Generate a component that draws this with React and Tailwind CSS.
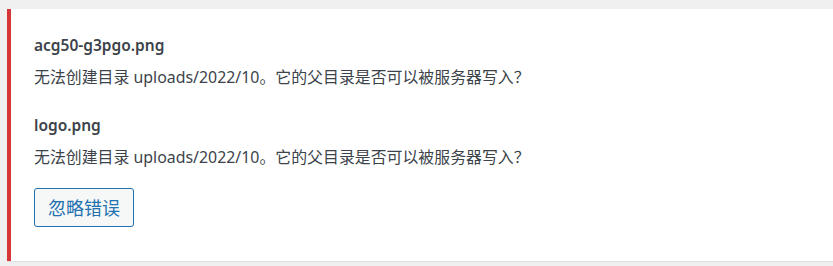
const files = [
	{ name: "acg50-g3pgo.png", error: "无法创建目录 uploads/2022/10。它的父目录是否可以被服务器写入？" },
	{ name: "logo.png", error: "无法创建目录 uploads/2022/10。它的父目录是否可以被服务器写入？" },
];

const UploadErrorNotice = () => {
	return (
		<div className="ml-[7px] mt-[9px] bg-white border-l-4 border-[#d63638] shadow-[0_1px_1px_rgba(0,0,0,0.06)] pl-[23px] pt-[24px] pb-[34px] text-[#3c434a]">
			{files.map((file, i) => (
				<div key={file.name} className={i > 0 ? "mt-[24px]" : ""}>
					<p className="text-[15.5px] leading-[24px] font-semibold">{file.name}</p>
					<p className="mt-[8px] text-[15.9px] leading-[24px]">{file.error}</p>
				</div>
			))}
			<button className="mt-[19px] h-[39px] px-[13px] rounded-[3px] border border-[#2271b1] bg-[#f6f7f7] text-[#2271b1] text-[18px] leading-none">
				忽略错误
			</button>
		</div>
	);
};

export default function App() {
	return (
		<div
			className="w-[833px] h-[266px] bg-[#f0f0f1] overflow-hidden"
			style={{ fontFamily: '"Noto Sans", "Noto Sans CJK SC", sans-serif' }}
		>
			<UploadErrorNotice />
		</div>
	);
}
